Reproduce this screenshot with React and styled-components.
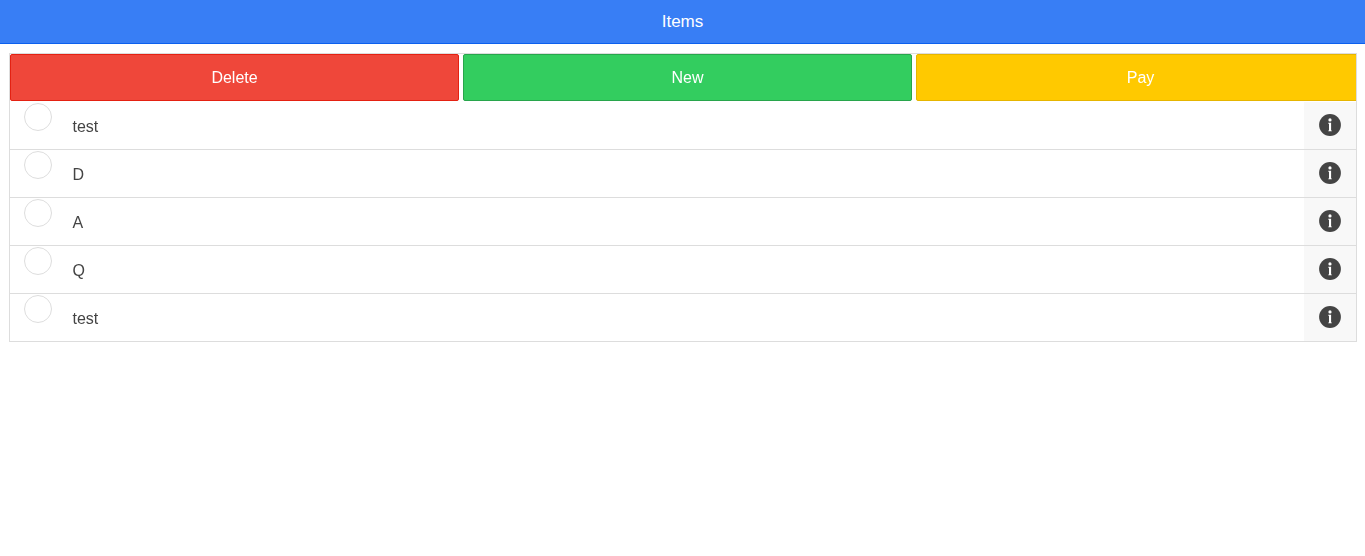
import React from "react";
import styled, { createGlobalStyle } from "styled-components";

const items = ["test", "D", "A", "Q", "test"];

const GlobalStyle = createGlobalStyle`
  html, body {
    margin: 0;
    padding: 0;
    background: #fff;
    font-family: "Liberation Sans", Arial, sans-serif;
    color: #444;
    -webkit-font-smoothing: antialiased;
    text-rendering: optimizeLegibility;
  }
  * {
    box-sizing: border-box;
  }
`;

const Header = styled.header`
  height: 44px;
  background-color: #387ef5;
  border-bottom: 1px solid #0c60ee;
  color: #fff;
  font-size: 17px;
  display: flex;
  align-items: center;
  justify-content: center;
  transform: translateZ(0);
`;

const Content = styled.main`
  padding: 9px 8px 0 9px;
  transform: translateZ(0);
`;

const ListBox = styled.div`
  border: 1px solid #ddd;
`;

const Toolbar = styled.div`
  display: grid;
  grid-template-columns: repeat(3, 449px);
  gap: 4px;
  height: 48px;
  overflow: hidden;
`;

const ActionButton = styled.button`
  height: 47px;
  padding: 0;
  font-family: inherit;
  font-size: 16px;
  color: #fff;
  border: 1px solid ${(p) => p.$border};
  border-radius: 2px;
  background-color: ${(p) => p.$bg};
`;

const Row = styled.div`
  display: flex;
  height: 48px;
  border-bottom: 1px solid #ddd;

  &:last-child {
    border-bottom: none;
    height: 47px;
  }
`;

const Check = styled.span`
  flex: none;
  width: 28px;
  height: 28px;
  margin: 1px 0 0 14px;
  border: 1px solid #ddd;
  border-radius: 50%;
  background: #fff;
`;

const Label = styled.span`
  flex: 1;
  padding: 15px 0 0 20.5px;
  font-size: 16px;
  line-height: 19px;
  color: #444;
`;

const InfoCell = styled.div`
  flex: none;
  width: 52px;
  background-color: #f8f8f8;
  display: flex;
  align-items: flex-start;
  justify-content: center;
  padding-top: 12px;
`;

const InfoIcon = () => (
  <svg width="22" height="22" viewBox="0 0 22 22" aria-hidden="true">
    <circle cx="11" cy="11" r="10.9" fill="#444" />
    <circle cx="11" cy="5.9" r="1.6" fill="#fff" />
    <path d="M9.3 8.8h2.8v7.6h0.7v0.9H9.3v-0.9h0.7v-6.7H9.3z" fill="#fff" />
  </svg>
);

export default function App() {
  return (
    <>
      <GlobalStyle />
      <Header>Items</Header>
      <Content>
        <ListBox>
          <Toolbar>
            <ActionButton $bg="#ef473a" $border="#e42112">Delete</ActionButton>
            <ActionButton $bg="#33cd5f" $border="#28a54c">New</ActionButton>
            <ActionButton $bg="#ffc900" $border="#e6b500">Pay</ActionButton>
          </Toolbar>
          {items.map((item, i) => (
            <Row key={i}>
              <Check />
              <Label>{item}</Label>
              <InfoCell>
                <InfoIcon />
              </InfoCell>
            </Row>
          ))}
        </ListBox>
      </Content>
    </>
  );
}
